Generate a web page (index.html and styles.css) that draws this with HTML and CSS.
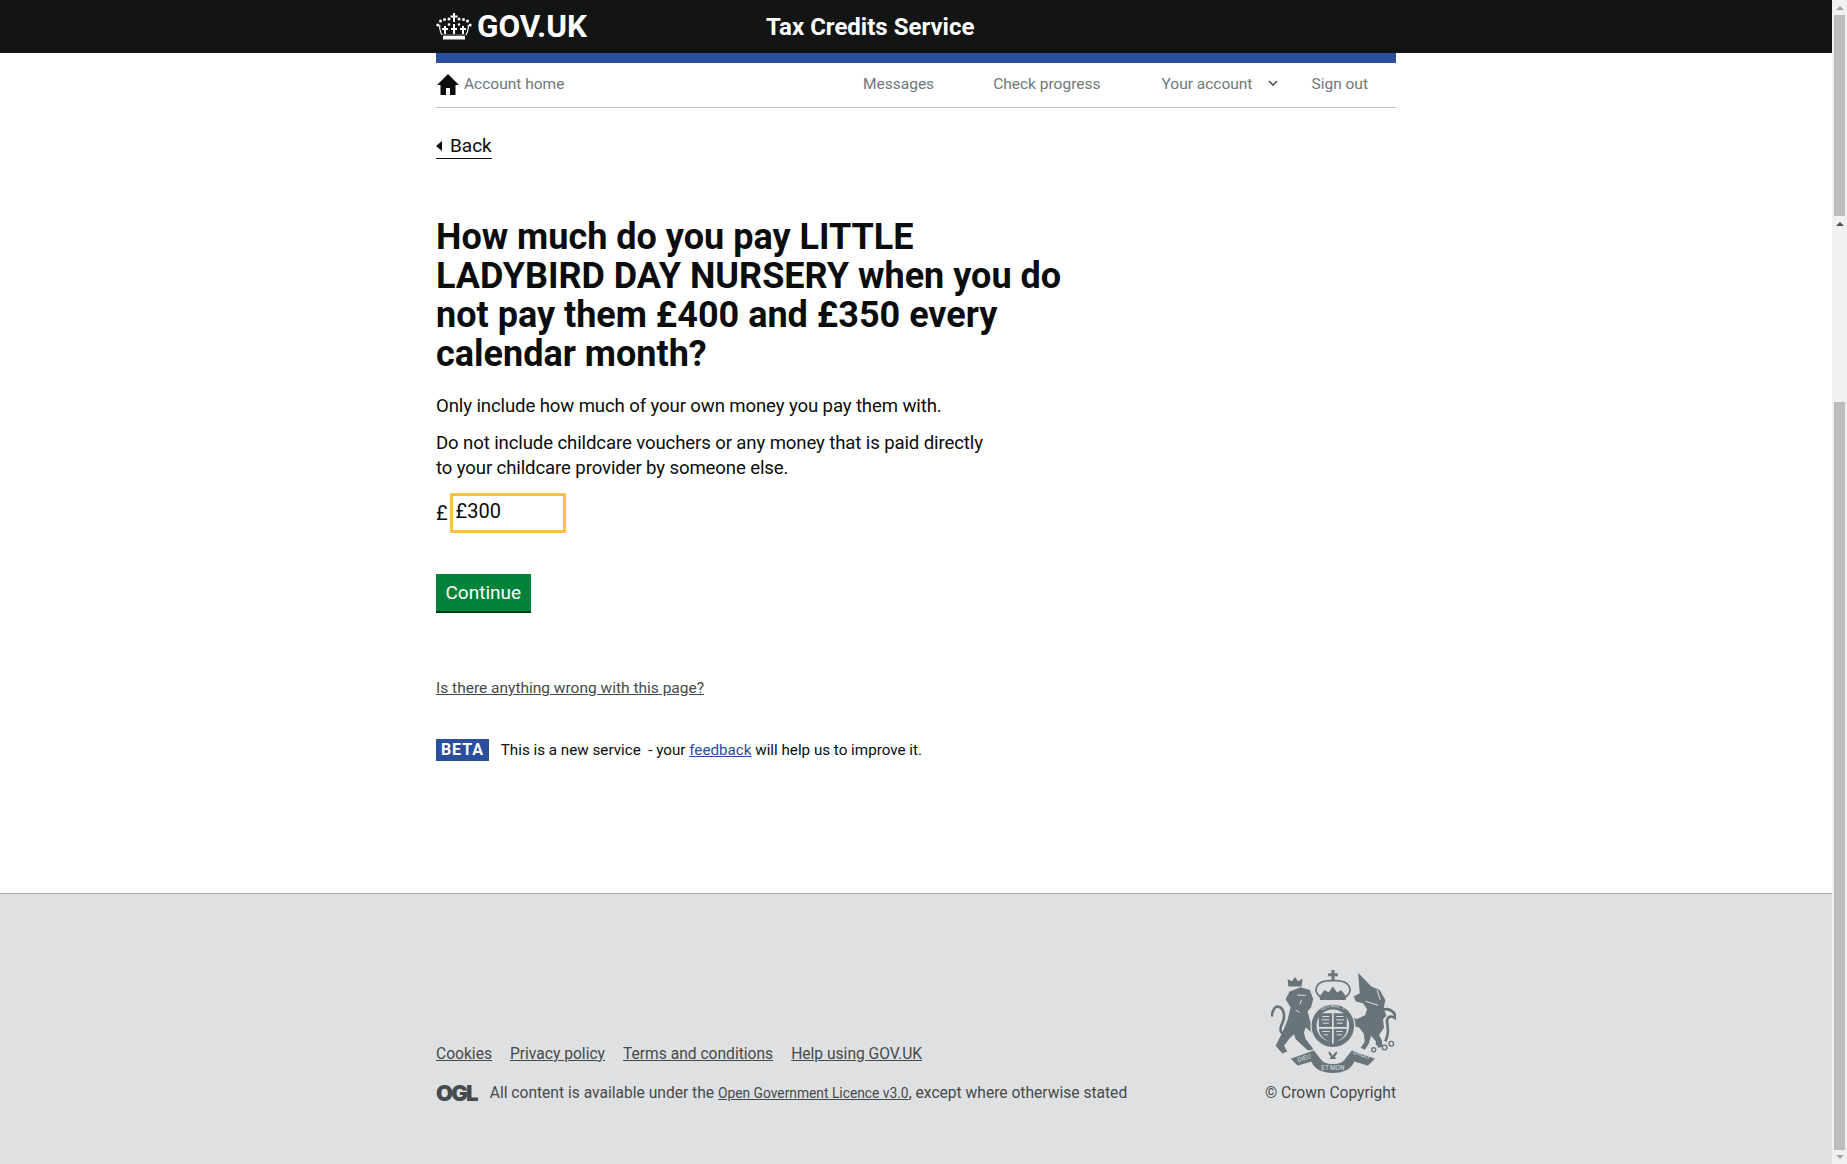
FILE: index.html
```html
<!DOCTYPE html>
<html lang="en">
  <head>
    <meta charset="UTF-8" />
    <title>Tax Credits Service</title>
    <link rel="stylesheet" href="styles.css">
  </head>
  <body>
    <div class="page">
      <header class="top">
        <div class="wrap top-inner">
          <a class="logo" href="#">
            <svg class="crown" viewBox="0 0 36 30" width="36" height="30">
              <g fill="none" stroke="#fff" stroke-width="1.200">
                <path d="M7 25h22" stroke-width="5"/>
                <path d="M6 23C4 19 3 16 4 13M30 23c2-4 3-7 2-10"/>
              </g>
              <path d="M7 22.500h22v1.200H7z" fill="#131514"/>
              <g fill="#fff">
                <path d="M17 1h2v2.500h2.500v2H19V10h-2V5.500h-2.500v-2H17z"/>
                <circle cx="13" cy="7" r="1.500"/><circle cx="23" cy="7" r="1.500"/>
                <circle cx="8.500" cy="7.500" r="1.500"/><circle cx="27.500" cy="7.500" r="1.500"/>
                <circle cx="4.500" cy="9" r="1.500"/><circle cx="31.500" cy="9" r="1.500"/>
                <circle cx="1.800" cy="13" r="1.500"/><circle cx="34.200" cy="13" r="1.500"/>
                <path d="M8 14h2v2h2v2h-2v4H8v-4H6v-2h2zM17 12h2v4h2v2h-2v4h-2v-4h-2v-2h2zM26 14h2v2h2v2h-2v4h-2v-4h-2v-2h2z"/>
                <circle cx="13" cy="12.500" r="1.300"/><circle cx="23" cy="12.500" r="1.300"/>
              </g>
            </svg>
            <span>GOV.UK</span>
          </a>
          <span class="service">Tax Credits Service</span>
        </div>
      </header>

      <div class="wrap">
        <div class="blue-bar"></div>
        <nav class="nav">
          <a class="nav-home" href="#">
            <svg viewBox="0 0 22 22" width="22" height="22"><path d="M11 1 22 12h-3.500v10H13v-7H9v7H3.500V12H0z" fill="#0b0c0c"/></svg>
            Account home
          </a>
          <div class="nav-right">
            <a href="#" class="nav-messages">Messages</a>
            <a href="#" class="nav-progress">Check progress</a>
            <a href="#" class="nav-account">Your account
              <svg viewBox="0 0 10 7" width="10" height="7"><path d="M1 1l4 4 4-4" fill="none" stroke="#555" stroke-width="1.600"/></svg>
            </a>
            <a href="#">Sign out</a>
          </div>
        </nav>

        <main class="main">
          <a class="back" href="#">Back</a>
          <h1>How much do you pay LITTLE LADYBIRD DAY NURSERY when you do not pay them £400 and £350 every calendar month?</h1>
          <p class="first">Only include how much of your own money you pay them with.</p>
          <p>Do not include childcare vouchers or any money that is paid directly to your childcare provider by someone else.</p>
          <div class="amount">
            <label for="amount">£</label>
            <input id="amount" type="text" value="£300" />
          </div>
          <button class="continue" type="button">Continue</button>
          <a class="wrong" href="#">Is there anything wrong with this page?</a>
          <div class="beta">
            <strong class="beta-tag">BETA</strong>
            <span>This is a new service &nbsp;- your <a href="#">feedback</a> will help us to improve it.</span>
          </div>
        </main>
      </div>

      <footer class="footer">
        <div class="wrap footer-inner">
          <div class="footer-left">
            <ul class="footer-links">
              <li><a href="#">Cookies</a></li>
              <li><a href="#">Privacy policy</a></li>
              <li><a href="#">Terms and conditions</a></li>
              <li><a href="#">Help using GOV.UK</a></li>
            </ul>
            <div class="licence">
              <span class="ogl">OGL</span>
              <span>All content is available under the <a href="#">Open Government Licence v3.0</a>, except where otherwise stated</span>
            </div>
          </div>
          <div class="crest">
            <svg viewBox="16 10 376 310" width="125" height="103">
              <defs>
                <path id="garter-top" d="M141 195a62 62 0 1 1 122 0"/>
              </defs>
              <g class="arms">
                <!-- lion -->
                <path d="M72 75l33-13 28 8 10 28-7 25-10 12 8 30 20 26 3 15-15-5-22-18-5 15 5 20 20 25 5 12-20-4-35-33-5-15-15 15-15 20 10 17-15 6-20-23 20-40 15-35 10-40-15-25z"/>
                <path class="arms-cut" d="M95 85l25 2M108 100l-6 14M90 130l12 8"/>
                <path d="M68 60 66 38l13 6 9-13 9 13 14-8-3 24z"/>
                <path class="arms-line" d="M80 190C55 215 35 200 50 170 60 150 55 120 35 120 25 122 20 135 18 150"/>
                <!-- unicorn -->
                <path d="M278 18l40 42 25 10 17 30-5 25 8 22-10 12 3 25-15 22 8 15 3 20-14 3-5-18-16-18-7 24-12 18-12-6 12-18-3-25-14-18-23-6-10-15 8-14 18 10 25-12 6-18-12-18-22-5-6-15 18-10z"/>
                <path class="arms-cut" d="M300 104l38 12M335 70l10 30"/>
                <path class="arms-line" d="M350 130C375 122 392 140 390 155 378 146 365 150 365 165 367 185 372 200 360 225"/>
                <g class="arms-ring">
                  <circle cx="340" cy="230" r="7"/><circle cx="358" cy="243" r="7"/><circle cx="378" cy="232" r="7"/><circle cx="325" cy="250" r="6"/>
                </g>
                <!-- royal crown -->
                <path d="M198 10h9v10h10v9h-10v13h-9V29h-10v-9h10z"/>
                <path class="arms-line arms-thin" d="M165 92C140 72 150 42 195 42h15c45 0 55 30 30 50"/>
                <path d="M163 88l14-18 12 8 13-18 13 18 12-8 14 18v12h-78z"/>
                <!-- garter and shield -->
                <circle class="arms-outline" cx="202" cy="178" r="66"/>
                <circle cx="202" cy="178" r="49" fill="#dee0e2"/>
                <path d="M160 140h84v46c0 26-24 36-42 46-18-10-42-20-42-46z"/>
                <path class="arms-gap" d="M202 140v92M160 184h84"/>
                <path class="arms-dot" d="M170 150h22M168 160h24M172 170h18M212 150h22M212 160h24M214 170h18M212 195h20M214 205h16M170 195h22M174 205h14"/>
                <!-- flower and motto -->
                <path class="arms-outline" d="M188 252c6 2 11 6 14 12 3-6 8-10 14-12 2 8 0 14-6 19l6 9h-28l6-9c-6-5-8-11-6-19z"/>
                <path class="arms-outline" d="M72 276l74-26 20 26c6 10 16 15 36 15s30-5 36-15l20-26 74 26-24 24-40-12c-10 22-32 34-66 34s-56-12-66-34l-40 12z"/>
              </g>
              <text class="arms-garter"><textPath href="#garter-top" startOffset="50%" text-anchor="middle">QUI MAL Y</textPath></text>
              <text class="arms-motto" x="98" y="288" transform="rotate(-19 98 288)">DIEU</text>
              <text class="arms-motto" x="202" y="312" text-anchor="middle">ET MON</text>
              <text class="arms-motto" x="262" y="262" transform="rotate(19 262 262)">DROIT</text>
            </svg>
            <span>© Crown Copyright</span>
          </div>
        </div>
      </footer>
    </div>

    <div class="scrollbar">
      <span class="arrow-up arrow-light"></span>
      <span class="thumb thumb-top"></span>
      <span class="arrow-up arrow-dark"></span>
      <span class="track-gap"></span>
      <span class="thumb thumb-bottom"></span>
      <span class="arrow-down"></span>
    </div>
  </body>
</html>
```

FILE: styles.css
```css
* {
  box-sizing: border-box;
}
html,
body {
  height: 1164px;
  margin: 0;
  overflow: hidden;
}
body {
  display: flex;
  font-family: Roboto, Arial, sans-serif;
  color: #0b0c0c;
  background: #fff;
}
a {
  color: inherit;
}
.page {
  flex: 1;
  display: flex;
  flex-direction: column;
  min-width: 0;
}
.wrap {
  width: 960px;
  margin-left: 436px;
}

/* header */
.top {
  height: 53px;
  background: #131514;
  color: #fff;
}
.top-inner {
  display: flex;
  align-items: center;
  height: 53px;
}
.logo {
  display: flex;
  align-items: center;
  gap: 5px;
  width: 330px;
  color: #fff;
  text-decoration: none;
  font-size: 31.500px;
  font-weight: 700;
}
.service {
  font-size: 24px;
  font-weight: 700;
}
.blue-bar {
  height: 10px;
  background: #2b4e9e;
}

/* nav */
.nav {
  display: flex;
  justify-content: space-between;
  align-items: center;
  height: 45px;
  padding-bottom: 3px;
  border-bottom: 1px solid #bfc1c3;
  font-size: 15.500px;
  color: #6f777b;
}
.nav a {
  text-decoration: none;
}
.nav-home {
  display: flex;
  align-items: center;
  gap: 5px;
}
.nav-home svg {
  margin-left: 1px;
}
.nav-right {
  display: flex;
  align-items: center;
  padding-right: 28px;
}
.nav-messages {
  margin-right: 59px;
}
.nav-progress {
  margin-right: 61px;
}
.nav-account {
  display: flex;
  align-items: center;
  gap: 16px;
  margin-right: 33px;
}

/* main */
.main {
  height: 785px;
  padding-top: 26px;
  font-size: 18.600px;
  letter-spacing: -0.120px;
}
.back {
  display: inline-block;
  position: relative;
  padding-left: 14px;
  font-size: 19px;
  line-height: 24px;
  letter-spacing: 0;
  text-decoration: none;
  border-bottom: 1px solid #0b0c0c;
}
.back::before {
  content: "";
  position: absolute;
  left: 0;
  top: 7px;
  border-style: solid;
  border-width: 5px 6px 5px 0;
  border-color: transparent #0b0c0c transparent transparent;
}
h1 {
  width: 630px;
  margin: 59px 0 0;
  font-size: 36px;
  line-height: 39px;
  font-weight: 700;
  letter-spacing: 0;
}
p {
  width: 560px;
  margin: 12px 0 0;
  line-height: 25px;
}
p.first {
  margin-top: 20px;
}
.amount {
  display: flex;
  align-items: center;
  gap: 2px;
  margin-top: 12px;
}
.amount label {
  font-size: 20px;
}
.amount input {
  width: 116px;
  height: 40px;
  padding: 0 3px 4px;
  border: 3px solid #ffbf47;
  outline: none;
  font: inherit;
  font-size: 20px;
  color: #0b0c0c;
}
.continue {
  display: block;
  height: 39px;
  margin-top: 41px;
  padding: 0 9.500px;
  border: none;
  border-bottom: 2px solid #003618;
  background: #00823b;
  color: #fff;
  font: inherit;
  font-size: 19px;
}
.wrong {
  display: inline-block;
  margin-top: 66px;
  font-size: 15.500px;
  letter-spacing: 0;
  color: #454a4c;
}
.beta {
  display: flex;
  align-items: center;
  gap: 12px;
  margin-top: 41px;
  font-size: 15.200px;
  letter-spacing: 0;
}
.beta-tag {
  padding: 0 5px;
  height: 22px;
  line-height: 22px;
  background: #2b4e9e;
  color: #fff;
  font-size: 16px;
  letter-spacing: 0.900px;
}
.beta a {
  color: #2b4e9e;
}

/* footer */
.footer {
  flex: 1;
  background: #dee0e2;
  border-top: 1px solid #a1acb2;
  color: #454a4c;
  font-size: 15.600px;
}
.footer-inner {
  display: flex;
  justify-content: space-between;
  align-items: flex-end;
  height: 209px;
}
.footer-links {
  display: flex;
  gap: 18px;
  margin: 0 0 20px;
  padding: 0;
  list-style: none;
}
.licence {
  display: flex;
  align-items: center;
  gap: 13px;
}
.licence a {
  font-size: 13.800px;
}
.ogl {
  font-family: Inter, sans-serif;
  font-size: 22px;
  font-weight: 900;
  line-height: 20px;
  letter-spacing: -1.800px;
  color: #454a4c;
}
.crest {
  display: flex;
  flex-direction: column;
  align-items: flex-end;
  gap: 11px;
  margin-bottom: 1px;
}
.crest svg {
  display: block;
}
.arms {
  fill: #68737a;
}
.arms-line {
  fill: none;
  stroke: #68737a;
  stroke-width: 8;
}
.arms-thin {
  stroke-width: 5;
}
.arms-outline {
  stroke: #dee0e2;
  stroke-width: 4;
}
.arms-cut {
  fill: none;
  stroke: #dee0e2;
  stroke-width: 3;
}
.arms-ring circle {
  fill: none;
  stroke: #68737a;
  stroke-width: 4;
}
.arms-gap {
  fill: none;
  stroke: #dee0e2;
  stroke-width: 5;
}
.arms-dot {
  fill: none;
  stroke: #dee0e2;
  stroke-width: 3;
}
.arms-garter {
  font-size: 15px;
  fill: #dee0e2;
}
.arms-motto {
  font-size: 19px;
  fill: #dee0e2;
}

/* scrollbar */
.scrollbar {
  display: flex;
  flex-direction: column;
  align-items: center;
  flex: 0 0 15px;
  width: 15px;
  height: 1164px;
  background: #f1f1f1;
}
.thumb {
  display: block;
  width: 11px;
  background: #bdbdbd;
}
.thumb-top {
  height: 201px;
}
.thumb-bottom {
  height: 748px;
}
.track-gap {
  flex: 1;
}
.arrow-up,
.arrow-down {
  display: block;
  width: 0;
  border-left: 4px solid transparent;
  border-right: 4px solid transparent;
}
.arrow-up {
  border-bottom: 4px solid #a3a3a3;
}
.arrow-light {
  margin: 6px 0 5px;
}
.arrow-dark {
  margin-top: 6px;
  border-bottom-color: #505050;
}
.arrow-down {
  margin: 5px 0 5px;
  border-top: 4px solid #a3a3a3;
}
```
